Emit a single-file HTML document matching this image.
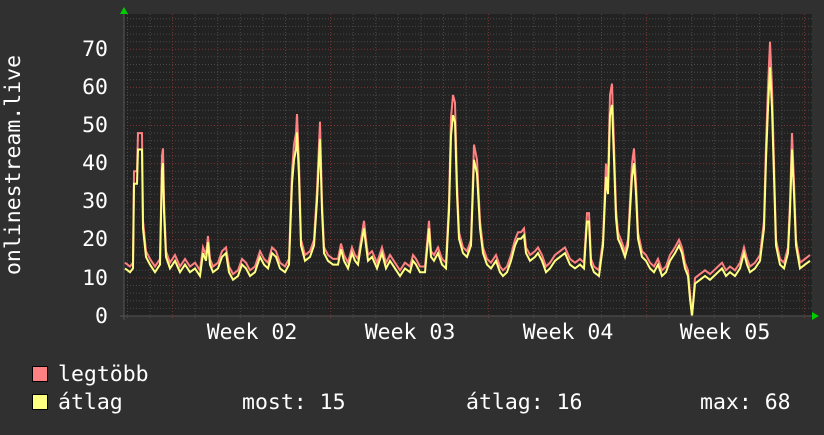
<!DOCTYPE html>
<html><head><meta charset="utf-8"><style>
body{margin:0;background:#303030;width:824px;height:430px;overflow:hidden}
text{font-family:"DejaVu Sans Mono","Liberation Mono",monospace;fill:#fff;font-size:21.5px}
</style></head><body>
<svg id="s" width="824" height="430" xmlns="http://www.w3.org/2000/svg">
<rect x="0" y="0" width="824" height="430" fill="#303030"/>
<rect x="124" y="14" width="688" height="302" fill="#222"/>
<g id="grid"></g>
<g id="data"></g>
<line x1="120" y1="316" x2="814" y2="316" stroke="#555" stroke-width="1"/>
<line x1="124" y1="320" x2="124" y2="12" stroke="#555" stroke-width="1"/>
<polygon points="812,312 819,316 812,320" fill="#0c0"/>
<polygon points="120,14 124,7 128,14" fill="#0c0"/>
<g text-anchor="end">
<text x="108" y="56">70</text><text x="108" y="94">60</text><text x="108" y="132">50</text>
<text x="108" y="170">40</text><text x="108" y="208">30</text><text x="108" y="246">20</text>
<text x="108" y="285">10</text><text x="108" y="323">0</text>
</g>
<g text-anchor="middle">
<text x="252" y="339">Week 02</text><text x="410" y="339">Week 03</text>
<text x="568" y="339">Week 04</text><text x="725" y="339">Week 05</text>
</g>
<text transform="translate(20,165) rotate(-90)" text-anchor="middle">onlinestream.live</text>
<rect x="32.5" y="366.5" width="15" height="15" fill="#ff8080" stroke="#000"/>
<rect x="32.5" y="394.5" width="15" height="15" fill="#ffff80" stroke="#000"/>
<text x="58" y="381">legtöbb</text>
<text x="58" y="409">átlag</text>
<text x="242" y="409">most: 15</text>
<text x="466" y="409">átlag: 16</text>
<text x="700" y="409">max: 68</text>
</svg>
<script>
var g=document.getElementById('grid'),h='';
for(var v=0;v<=78;v+=2){var y=316-v*3.81;if(y<14)break;var maj=v%10==0;
h+='<line x1="124" x2="812" y1="'+y.toFixed(1)+'" y2="'+y.toFixed(1)+'" stroke="'+(maj?'#7a3535':'#4a4a4a')+'" stroke-dasharray="1,2"/>';}
for(var x=127.5;x<812;x+=22.57){var maj=Math.abs(((x-172)/158)-Math.round((x-172)/158))<0.02;
h+='<line y1="14" y2="320" x1="'+x.toFixed(1)+'" x2="'+x.toFixed(1)+'" stroke="'+(maj?'#7a3535':'#4a4a4a')+'" stroke-dasharray="1,2"/>';}
g.innerHTML=h;
var d=[125,14,130,13,133,14,134,38,137,38,138,48,142,48,143,25,146,17,150,15,155,13,160,15,162,42,163,44,164,30,166,17,170,14,175,16,180,13,185,15,190,13,195,14,200,12,203,18,206,16,208,21,210,15,213,13,218,14,222,17,226,18,229,13,233,11,238,12,242,15,246,14,250,12,255,13,260,17,264,15,268,14,272,18,276,17,280,14,285,13,289,15,292,38,294,45,296,48,297,53,299,40,301,20,305,16,310,17,314,20,317,33,320,51,322,30,324,18,328,16,333,15,338,15,341,19,344,16,348,14,352,18,355,16,358,15,361,20,364,25,366,20,368,16,372,17,377,14,382,18,386,14,390,16,395,14,400,12,405,14,410,13,413,16,416,15,420,13,425,13,429,25,431,17,434,16,438,18,442,15,446,14,449,30,451,52,453,58,455,56,457,35,459,22,463,18,467,17,471,20,474,45,477,41,480,25,483,18,487,15,491,14,496,16,500,13,503,12,507,13,511,16,515,20,518,22,521,22,524,23,526,18,530,16,535,17,538,18,542,16,546,13,550,14,555,16,560,17,565,18,570,15,575,14,580,15,584,14,587,27,589,27,591,15,594,13,599,12,603,20,606,40,608,35,610,58,612,61,614,45,616,28,618,22,621,20,625,17,628,20,632,40,634,44,636,35,638,22,642,17,646,16,650,14,654,13,658,15,662,12,666,13,670,16,675,18,679,20,682,18,685,14,688,12,690,6,692,0,695,10,700,11,705,12,710,11,714,12,718,13,722,14,726,12,730,13,735,12,740,14,744,18,747,15,750,13,755,14,760,16,764,25,766,45,768,60,770,72,772,60,774,40,776,20,780,15,784,14,788,18,790,30,792,48,794,35,796,20,800,14,805,15,810,16];
var r='',yl='';
for(var i=0;i<d.length;i+=2){var x=d[i],v=d[i+1];var a=v-(v>20?(v-20)*0.1+1.5:1.5);if(a<0)a=0;
r+=x+','+(316-v*3.81).toFixed(1)+' ';yl+=x+','+(316-a*3.81).toFixed(1)+' ';}
document.getElementById('data').innerHTML='<polyline points="'+r+'" fill="none" stroke="#ff8080" stroke-width="2"/><polyline points="'+yl+'" fill="none" stroke="#ffff80" stroke-width="2"/>';
</script>
</body></html>
